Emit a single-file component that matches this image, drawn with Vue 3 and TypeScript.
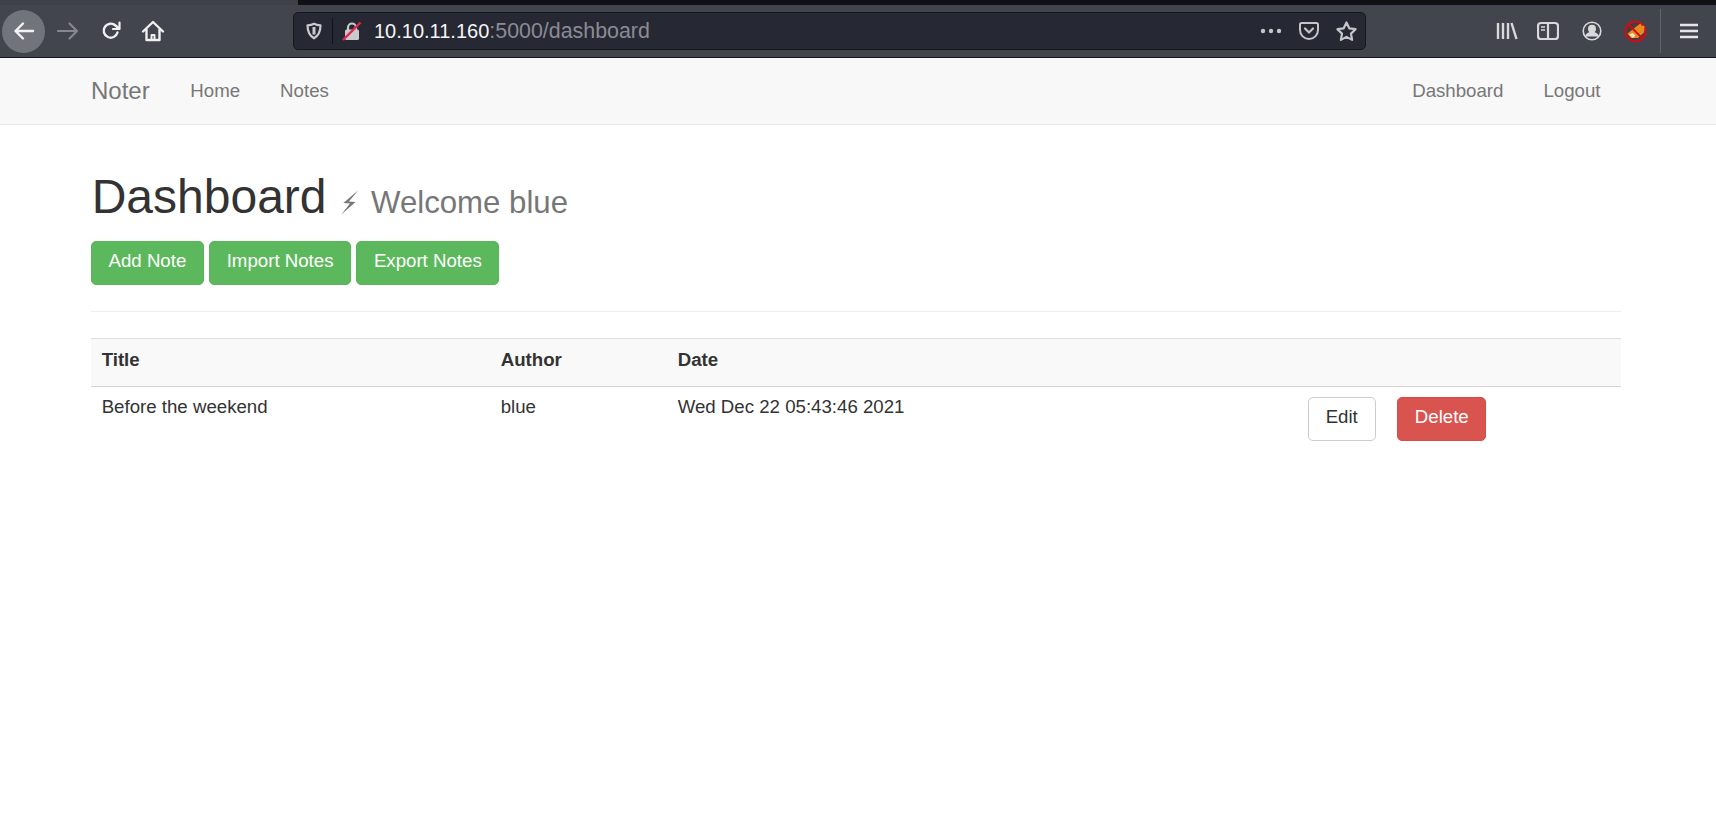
<script setup lang="ts">
interface Note { title: string; author: string; date: string }
const notes: Note[] = [{ title: 'Before the weekend', author: 'blue', date: 'Wed Dec 22 05:43:46 2021' }]
</script>

<template>
  <div class="browser">
    <div class="strip"><div class="tabline"></div></div>
    <div class="toolbar">
      <div class="nav-buttons">
        <span class="circle">
          <svg width="24" height="24" viewBox="0 0 24 24" fill="none" stroke="#f2f2f3" stroke-width="2.400" stroke-linecap="round" stroke-linejoin="round"><path d="M21 12H3.500M11 4.500 3.500 12l7.500 7.500"/></svg>
        </span>
        <svg class="fwd" width="24" height="24" viewBox="0 0 24 24" fill="none" stroke="#85878d" stroke-width="2.200" stroke-linecap="round" stroke-linejoin="round"><path d="M2 12h19M13.500 4.500 21 12l-7.500 7.500"/></svg>
        <svg class="reload" width="22" height="22" viewBox="0 0 22 22" fill="none" stroke="#f0f0f1" stroke-width="2.400" stroke-linecap="round" stroke-linejoin="round"><path d="M17.500 12.500a7 7 0 1 1-2-7L19 8.500"/><path d="M19.500 2.500v6.500h-6.500" stroke-width="2.200"/></svg>
        <svg class="home" width="24" height="24" viewBox="0 0 24 24" fill="none" stroke="#f0f0f1" stroke-width="2.400" stroke-linejoin="round" stroke-linecap="round"><path d="M2 12.500 12 3l10 9.500M5.500 10.500V21h13V10.500"/><path d="M10.500 21v-5h3v5" stroke-width="2"/></svg>
      </div>
      <div class="urlbar">
        <svg class="shield" width="18" height="18" viewBox="0 0 18 18" fill="none" stroke="#c9cacd" stroke-width="2.200" stroke-linejoin="round"><path d="M9 1.800c2 1.100 4.200 1.500 6.500 1.500 0 5.500-1.300 10-6.500 13-5.200-3-6.500-7.500-6.500-13 2.300 0 4.500-.4 6.500-1.500Z"/><path d="M9 5v7.500" stroke-width="3"/></svg>
        <span class="sep"></span>
        <svg class="lock" width="20" height="20" viewBox="0 0 20 20"><path d="M6 9V6.500a4 4 0 0 1 8 0V9" fill="none" stroke="#c9cacd" stroke-width="2.200"/><rect x="3" y="8.500" width="14" height="10.500" rx="1.500" fill="#c9cacd"/><path d="M1 19 18.500 1.500" stroke="#e22850" stroke-width="2.400"/></svg>
        <span class="url"><span class="host">10.10.11.160</span><span class="path">:5000/dashboard</span></span>
        <span class="url-actions">
          <svg width="24" height="8" viewBox="0 0 24 8" fill="#c4c5c9"><circle cx="4" cy="4" r="2.200"/><circle cx="12" cy="4" r="2.200"/><circle cx="20" cy="4" r="2.200"/></svg>
          <svg width="22" height="22" viewBox="0 0 22 22" fill="none" stroke="#c4c5c9" stroke-width="2" stroke-linecap="round" stroke-linejoin="round"><path d="M3.500 3h15A1.500 1.500 0 0 1 20 4.500V10a9 9 0 0 1-18 0V4.500A1.500 1.500 0 0 1 3.500 3Z"/><path d="m7 8.500 4 4 4-4" stroke-width="2.200"/></svg>
          <svg width="23" height="23" viewBox="0 0 23 23" fill="none" stroke="#c4c5c9" stroke-width="2.200" stroke-linejoin="round"><path d="m11.500 2.500 2.800 5.800 6.300.9-4.600 4.400 1.100 6.300-5.600-3-5.600 3 1.100-6.300-4.600-4.400 6.300-.9Z"/></svg>
        </span>
      </div>
      <div class="tools">
        <svg class="t-lib" width="22" height="20" viewBox="0 0 22 20" fill="none" stroke="#d9d9db" stroke-width="2.400"><path d="M2 2v16M7 2v16M12 2v16M15.500 2l5 16"/></svg>
        <svg class="t-side" width="22" height="20" viewBox="0 0 22 20" fill="none" stroke="#d9d9db" stroke-width="2.200"><rect x="1" y="2" width="20" height="16" rx="3"/><path d="M11 2v16"/><path d="M4 6h4M4 9h4" stroke-width="1.500"/></svg>
        <svg class="t-user" width="20" height="20" viewBox="0 0 20 20" fill="none" stroke="#d9d9db" stroke-width="1.600"><circle cx="10" cy="10" r="8.800"/><circle cx="10" cy="7.800" r="3.200" fill="#d9d9db"/><path d="M3.800 15.500c1-3 3.200-4 6.200-4s5.200 1 6.200 4" fill="#d9d9db"/></svg>
        <svg class="t-fox" width="23" height="23" viewBox="0 0 23 23"><circle cx="11.500" cy="11.500" r="10" fill="#4a3a3c" stroke="#c8101c" stroke-width="2"/><path d="M3.500 13.500 13 6l3.500-2.500 1 2 3 .5-.5 6.500-6 5.500H7Z" fill="#e98a1f"/><path d="M5 14.500l4 3.500 2.500-2.500-3-2.500Z" fill="#f6e3c5"/><path d="M4.500 4.500l14 14" stroke="#c8101c" stroke-width="1.800"/></svg>
        <span class="t-sep"></span>
        <svg class="t-menu" width="18" height="16" viewBox="0 0 18 16" stroke="#e6e6e7" stroke-width="2.600"><path d="M0 2h18M0 8h18M0 14h18"/></svg>
      </div>
    </div>
    <div class="page">
      <nav class="navbar">
        <div class="nav-left">
          <a class="brand">Noter</a>
          <a class="link">Home</a>
          <a class="link">Notes</a>
        </div>
        <div class="nav-right">
          <a class="link">Dashboard</a>
          <a class="link">Logout</a>
        </div>
      </nav>
      <main class="container">
        <h1>Dashboard <small><svg class="bolt" width="20" height="27" viewBox="0 0 18 24" fill="#777"><path d="M16.500 1 3 12.500l6 .5L1 23l13-11.500-6-.5 8.500-10Z"/></svg> Welcome blue</small></h1>
        <div class="actions">
          <a class="btn green">Add Note</a>
          <a class="btn green">Import Notes</a>
          <a class="btn green">Export Notes</a>
        </div>
        <hr />
        <table>
          <colgroup>
            <col class="c1" /><col class="c2" /><col class="c3" /><col class="c4" />
          </colgroup>
          <thead>
            <tr><th>Title</th><th>Author</th><th>Date</th><th></th></tr>
          </thead>
          <tbody>
            <tr v-for="n in notes" :key="n.title">
              <td>{{ n.title }}</td>
              <td>{{ n.author }}</td>
              <td>{{ n.date }}</td>
              <td class="row-btns">
                <a class="btn white">Edit</a>
                <a class="btn red">Delete</a>
              </td>
            </tr>
          </tbody>
        </table>
      </main>
    </div>
  </div>
</template>

<style>
html, body { margin: 0; background: #fff; overflow: hidden; }
</style>

<style scoped>
.browser { width: 1716px; height: 837px; font-family: "Liberation Sans", Arial, sans-serif; display: flex; flex-direction: column; overflow: hidden; }
.strip { height: 5px; background: #3e4149; padding-left: 298px; flex: none; }
.tabline { height: 5px; background: #101015; }
.toolbar { height: 52px; flex: none; background: #42454e; border-bottom: 1px solid #14141a; display: flex; align-items: center; }
.nav-buttons { width: 293px; flex: none; display: flex; align-items: center; padding-left: 2px; box-sizing: border-box; }
.circle { width: 43px; height: 43px; border-radius: 50%; background: #72747b; display: flex; align-items: center; justify-content: center; }
.fwd { margin-left: 11px; }
.reload { margin-left: 20px; }
.home { margin-left: 19px; }
.urlbar { width: 1073px; height: 38px; flex: none; box-sizing: border-box; background: #262833; border: 1px solid #16171d; border-radius: 5px; display: flex; align-items: center; padding-left: 11px; }
.sep { width: 1px; height: 26px; background: #12131a; margin: 0 9px 0 9px; }
.url { margin-left: 12px; padding-top: 1px; flex: 1; white-space: nowrap; }
.host { color: #f4f5f7; font-size: 20px; }
.path { color: #8b8c93; font-size: 21.4px; }
.url-actions { display: flex; align-items: center; gap: 15px; padding-right: 7px; }
.tools { flex: 1; display: flex; align-items: center; height: 100%; position: relative; }
.t-lib { margin-left: 130px; }
.t-side { margin-left: 19px; }
.t-user { margin-left: 23px; }
.t-fox { margin-left: 22px; }
.t-sep { width: 1px; height: 44px; background: #61636a; margin-left: 13px; }
.t-menu { margin-left: 19px; }
.page { flex: 1; background: #fff; }
.navbar { height: 66px; box-sizing: content-box; background: #f8f8f8; border-bottom: 1px solid #e7e7e7; display: flex; justify-content: space-between; align-items: center; padding: 0 95.5px 0 91px; }
.nav-left, .nav-right { display: flex; align-items: center; }
.brand { font-size: 24px; color: #777; margin-right: 20.67px; }
.link { font-size: 18.67px; color: #777; padding: 0 20px; }
.container { padding: 0 95px 0 91px; color: #333; font-size: 18.67px; }
h1 { font-size: 48px; font-weight: 500; line-height: 1.1; margin: 0; padding: 46px 0 0 0.7px; color: #333; }
small { font-size: 31.2px; font-weight: 400; color: #777; }
.bolt { vertical-align: -3px; margin: 0 2.5px 0 0; }
.actions { margin-top: 17px; display: flex; gap: 5.4px; }
.btn { display: inline-block; box-sizing: border-box; height: 44px; line-height: 38px; padding: 0 16.5px; border: 1px solid transparent; border-radius: 5px; font-size: 18.67px; }
.green { background: #5cb85c; border-color: #58b558; color: #fff; }
.white { background: #fff; border-color: #ccc; color: #333; padding: 0 17px; }
.red { background: #d9534f; border-color: #d64c48; color: #fff; margin-left: 21.500px; }
hr { border: 0; border-top: 1px solid #eee; margin: 26px 0; }
table { width: 100%; border-collapse: collapse; table-layout: fixed; }
.c1 { width: 399px; } .c2 { width: 177px; } .c3 { width: 630px; }
th { text-align: left; font-weight: 700; background: #f9f9f9; padding: 8px 10.67px 13px; line-height: 26px; border-top: 1px solid #ddd; border-bottom: 1px solid #d6d6d6; }
td { padding: 7px 10.67px 10px; line-height: 26px; vertical-align: top; }
.row-btns { padding-top: 10px; white-space: nowrap; }
</style>
